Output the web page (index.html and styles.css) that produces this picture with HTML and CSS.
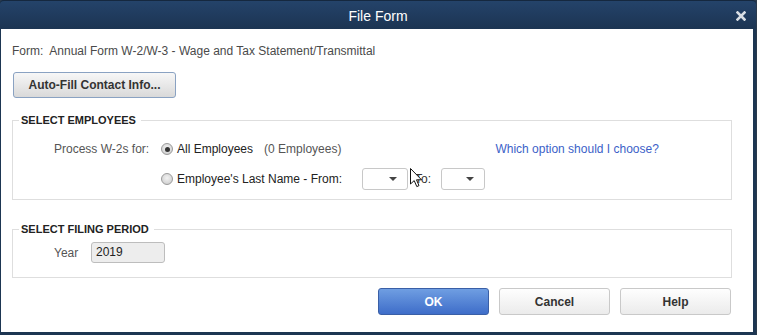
FILE: index.html
```html
<!DOCTYPE html>
<html lang="en">
<head>
    <meta charset="UTF-8">
    <meta name="viewport" content="width=device-width, initial-scale=1.0">
    <title>File Form</title>
    <link rel="stylesheet" href="styles.css">
</head>
<body>
    <div class="dialog">
        <div class="titlebar">
            <span class="title">File Form</span>
            <svg class="close" width="10" height="10" viewBox="0 0 10 10">
                <path d="M1.5 1.5 L8.5 8.5 M8.5 1.5 L1.5 8.5" stroke="#d9dee4" stroke-width="2.6" stroke-linecap="square"/>
            </svg>
        </div>
        <div class="content">
            <div class="form-name">Form:&nbsp; Annual Form W-2/W-3 - Wage and Tax Statement/Transmittal</div>
            <button class="btn-autofill">Auto-Fill Contact Info...</button>

            <fieldset class="group group-employees">
                <legend>SELECT EMPLOYEES</legend>
                <div class="emp-grid">
                    <span class="row-label">Process W-2s for:</span>
                    <div class="row">
                        <span class="radio checked"></span>
                        <span class="opt">All Employees</span>
                        <span class="count">(0 Employees)</span>
                        <a class="help-link" href="#">Which option should I choose?</a>
                    </div>
                    <span></span>
                    <div class="row">
                        <span class="radio"></span>
                        <span class="opt">Employee's Last Name - From:</span>
                        <span class="select sel-from"><i class="caret"></i></span>
                        <span class="to-label">To:</span>
                        <span class="select sel-to"><i class="caret"></i></span>
                    </div>
                </div>
            </fieldset>

            <fieldset class="group group-period">
                <legend>SELECT FILING PERIOD</legend>
                <div class="year-row">
                    <span class="year-label">Year</span>
                    <span class="year-input">2019</span>
                </div>
            </fieldset>

            <div class="actions">
                <button class="btn btn-ok">OK</button>
                <button class="btn">Cancel</button>
                <button class="btn">Help</button>
            </div>
        </div>
    </div>
    <svg class="cursor" width="13" height="20" viewBox="0 0 13 20">
        <path d="M0.5 0.5 L0.5 16 L4.2 12.6 L6.8 18.6 L9 17.6 L6.5 11.8 L11.5 11.8 Z" fill="#fff" stroke="#111" stroke-width="1" stroke-linejoin="round"/>
    </svg>
</body>
</html>
```

FILE: styles.css
```css
* {
    margin: 0;
    padding: 0;
    box-sizing: border-box;
}
body, html {
    height: 100%;
    font-family: "Liberation Sans", Arial, sans-serif;
    font-size: 12px;
    background-color: #2a3a4c;
}
body {
    position: relative;
    overflow: hidden;
}
.dialog {
    width: 756px;
    height: 335px;
    background-color: #1d3652;
    border-radius: 4px 4px 0 0;
    padding: 0 3px 3px 1px;
    display: flex;
    flex-direction: column;
}
.titlebar {
    height: 29px;
    flex-shrink: 0;
    margin: 0 -3px 0 -1px;
    border-radius: 4px 4px 0 0;
    background: linear-gradient(#24436a, #1c3452);
    border-top: 1px solid #15283f;
    display: flex;
    align-items: center;
    justify-content: center;
    position: relative;
}
.title {
    color: #fff;
    font-size: 14px;
    padding-top: 1px;
}
.close {
    position: absolute;
    left: 736px;
    top: 10px;
}
.content {
    flex: 1;
    background-color: #fff;
    padding: 15px 21px 0 11px;
}
.form-name {
    line-height: 14px;
    color: #4a4a4a;
}
.btn-autofill {
    display: block;
    margin: 14px 0 0 1px;
    width: 163px;
    height: 26px;
    font-family: inherit;
    font-size: 12px;
    font-weight: bold;
    color: #333;
    border: 1px solid #8aa2c2;
    border-radius: 3px;
    background: linear-gradient(#f7f7f7, #d9d9d9);
}
.group {
    border: 1px solid #dedede;
    padding: 11px 0 9px 0;
}
.group legend {
    margin-left: 6px;
    padding: 0 5px 0 2px;
    font-size: 11px;
    font-weight: bold;
    line-height: 13px;
    color: #222;
}
.group-employees {
    margin-top: 16px;
}
.group-period {
    margin-top: 23px;
    padding-top: 6px;
    padding-bottom: 14px;
}
.emp-grid {
    display: grid;
    grid-template-columns: 107px auto;
    row-gap: 8px;
    padding-left: 41px;
}
.row-label {
    color: #555;
    line-height: 22px;
}
.row {
    display: flex;
    align-items: center;
    height: 22px;
}
.radio {
    width: 12px;
    height: 12px;
    border-radius: 50%;
    border: 1px solid #9a9a9a;
    background: radial-gradient(circle at 50% 40%, #f2f2f2, #c8c8c8);
    margin-right: 4px;
    display: flex;
    align-items: center;
    justify-content: center;
}
.radio.checked::after {
    content: "";
    width: 5px;
    height: 5px;
    border-radius: 50%;
    background-color: #333;
}
.opt {
    color: #222;
}
.count {
    color: #555;
    margin-left: 11px;
}
.help-link {
    margin-left: 154px;
    color: #3c5fc8;
    text-decoration: none;
}
.select {
    display: inline-block;
    height: 22px;
    border: 1px solid #c8c8c8;
    border-radius: 3px;
    background: #fff;
    position: relative;
}
.sel-from {
    width: 46px;
    margin-left: 20px;
}
.sel-to {
    width: 44px;
}
.caret {
    position: absolute;
    right: 10px;
    top: 8px;
    border-left: 4px solid transparent;
    border-right: 4px solid transparent;
    border-top: 4px solid #444;
}
.to-label {
    color: #333;
    margin: 0 10px 0 7px;
}
.year-row {
    display: flex;
    align-items: center;
    height: 21px;
    padding-left: 41px;
}
.year-label {
    width: 37px;
    color: #555;
}
.year-input {
    width: 74px;
    height: 21px;
    line-height: 19px;
    padding-left: 4px;
    border: 1px solid #bdbdbd;
    border-radius: 3px;
    background: #ededed;
    color: #222;
}
.actions {
    display: flex;
    justify-content: flex-end;
    gap: 10px;
    margin-top: 10px;
    padding-right: 1px;
}
.btn {
    width: 111px;
    height: 27px;
    font-family: inherit;
    font-size: 12px;
    font-weight: bold;
    color: #333;
    border: 1px solid #c9c9c9;
    border-radius: 3px;
    background: linear-gradient(#fefefe, #ebebeb);
}
.btn-ok {
    color: #fff;
    border-color: #3a5fa6;
    background: linear-gradient(#6f9ee2, #3e6dc9);
}
.cursor {
    position: absolute;
    left: 410px;
    top: 168px;
}
```
